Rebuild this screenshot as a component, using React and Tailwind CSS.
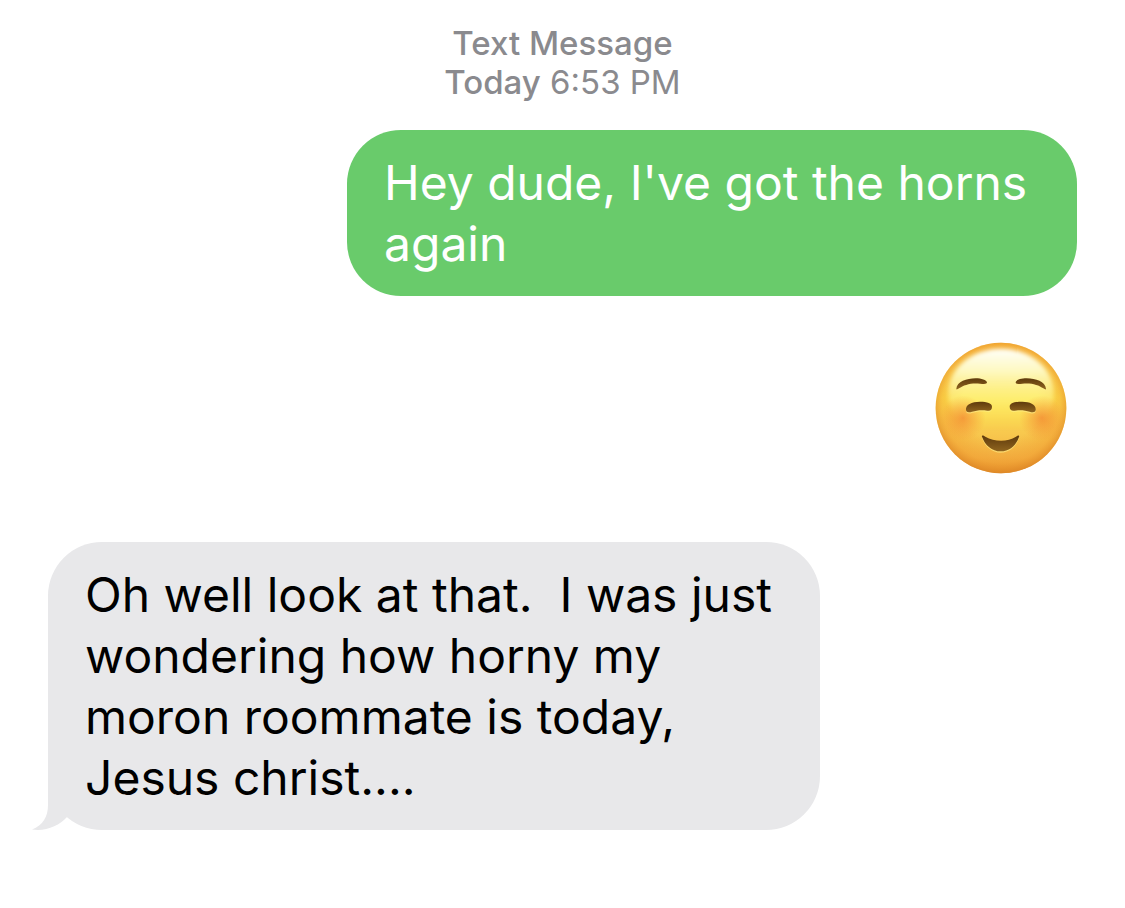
const messages = [
  { id: 1, from: 'me', text: "Hey dude, I've got the horns again" },
  { id: 2, from: 'me', sticker: true },
  {
    id: 3,
    from: 'them',
    text: 'Oh well look at that.\u00a0 I was just wondering how horny my moron roommate is today, Jesus christ....',
  },
]

function SmilingFace() {
  return (
    <svg viewBox="0 0 396 396" className="size-33" role="img" aria-label="Smiling face">
      <defs>
        <linearGradient id="face" x1="0" y1="0" x2="0" y2="1">
          <stop offset="0" stopColor="#f5b63a" />
          <stop offset="0.2" stopColor="#fad452" />
          <stop offset="0.42" stopColor="#fde650" />
          <stop offset="0.65" stopColor="#f9cd50" />
          <stop offset="0.88" stopColor="#f3b344" />
          <stop offset="1" stopColor="#e6962f" />
        </linearGradient>
        <radialGradient id="edge" cx="0.5" cy="0.47" r="0.53">
          <stop offset="0.55" stopColor="#f0982c" stopOpacity="0" />
          <stop offset="0.85" stopColor="#f0982c" stopOpacity="0.4" />
          <stop offset="1" stopColor="#dc8424" stopOpacity="0.8" />
        </radialGradient>
        <linearGradient id="shine" x1="0" y1="0" x2="0" y2="1">
          <stop offset="0" stopColor="#fffffa" />
          <stop offset="0.25" stopColor="#fefbc8" stopOpacity="0.95" />
          <stop offset="0.55" stopColor="#fef48c" stopOpacity="0.6" />
          <stop offset="0.9" stopColor="#feee58" stopOpacity="0" />
        </linearGradient>
        <radialGradient id="blush">
          <stop offset="0" stopColor="#f27a2c" stopOpacity="0.65" />
          <stop offset="0.5" stopColor="#f3842f" stopOpacity="0.35" />
          <stop offset="1" stopColor="#f58f34" stopOpacity="0" />
        </radialGradient>
        <linearGradient id="feature" x1="0" y1="0" x2="0" y2="1">
          <stop offset="0" stopColor="#5e3a0c" />
          <stop offset="1" stopColor="#8f641f" />
        </linearGradient>
        <filter id="soften" x="-10%" y="-10%" width="120%" height="120%">
          <feGaussianBlur stdDeviation="6" />
        </filter>
      </defs>
      <circle cx="198" cy="198" r="196" fill="url(#face)" />
      <circle cx="198" cy="198" r="196" fill="url(#edge)" />
      <ellipse cx="198" cy="152" rx="158" ry="132" fill="url(#shine)" filter="url(#soften)" />
      <circle cx="84" cy="228" r="68" fill="url(#blush)" />
      <circle cx="320" cy="228" r="68" fill="url(#blush)" />
      {/* light rim under every feature */}
      <g fill="#fff08a" opacity="0.6" transform="translate(0 4)">
        <path d="M64 140C66 119 95 109 122 109C139 109 155 114 156 121C156 127 147 126 135 125C108 122 86 129 72 139C66 143 64 143 64 140Z" />
        <path d="M333 140C331 119 302 109 275 109C258 109 243 114 242 121C242 127 250 126 262 125C289 122 311 129 325 139C331 143 333 143 333 140Z" />
        <path d="M93 204C91 188 110 179 135 179C157 179 171 184 171 194C171 203 166 208 157 206C140 203 124 205 111 209C101 212 94 211 93 204Z" />
        <path d="M302 204C304 188 285 179 262 179C239 179 224 184 224 194C224 203 230 208 239 206C255 203 272 205 284 209C294 212 301 211 302 204Z" />
        <path d="M141 284C139 279 145 280 151 284C178 300 217 301 243 284C250 279 254 279 252 285C243 311 223 328 197 328C171 328 150 310 141 284Z" />
      </g>
      <g fill="url(#feature)">
        <path d="M64 140C66 119 95 109 122 109C139 109 155 114 156 121C156 127 147 126 135 125C108 122 86 129 72 139C66 143 64 143 64 140Z" />
        <path d="M333 140C331 119 302 109 275 109C258 109 243 114 242 121C242 127 250 126 262 125C289 122 311 129 325 139C331 143 333 143 333 140Z" />
        <path d="M93 204C91 188 110 179 135 179C157 179 171 184 171 194C171 203 166 208 157 206C140 203 124 205 111 209C101 212 94 211 93 204Z" />
        <path d="M302 204C304 188 285 179 262 179C239 179 224 184 224 194C224 203 230 208 239 206C255 203 272 205 284 209C294 212 301 211 302 204Z" />
        <path d="M141 284C139 279 145 280 151 284C178 300 217 301 243 284C250 279 254 279 252 285C243 311 223 328 197 328C171 328 150 310 141 284Z" />
      </g>
    </svg>
  )
}

function Tail() {
  return (
    <svg viewBox="0 0 36 56" className="absolute -left-4 bottom-0 h-14 w-9 text-[#e8e8ea]" aria-hidden="true">
      <path fill="currentColor" d="M16 0V31C16 43 11 51 0 55.5C14 57.5 27 52 35 43V0Z" />
    </svg>
  )
}

function Message({ from, text, sticker }) {
  if (sticker) {
    return (
      <div className="self-end pt-[46px] pr-2.5 pb-[68px]">
        <SmilingFace />
      </div>
    )
  }
  if (from === 'me') {
    return (
      <div className="max-w-[730px] self-end rounded-[54px] bg-[#69cb6b] px-[37px] py-[22px] text-white">
        <p>{text}</p>
      </div>
    )
  }
  return (
    <div className="relative max-w-[772px] self-start rounded-[54px] bg-[#e8e8ea] px-[37px] pt-[22px] pb-[22px] text-black">
      <Tail />
      <p>{text}</p>
    </div>
  )
}

export default function App() {
  return (
    <main className="min-h-screen bg-white px-12 pt-6 font-['Inter','Liberation_Sans',sans-serif]">
      <header className="pb-7 text-center text-[33px] leading-[39px] text-[#8a8a8e]">
        <p className="font-medium">Text Message</p>
        <p>
          <span className="font-medium">Today</span> <time dateTime="18:53">6:53 PM</time>
        </p>
      </header>
      <section className="flex flex-col text-[48px] leading-[61px]">
        {messages.map((message) => (
          <Message key={message.id} {...message} />
        ))}
      </section>
    </main>
  )
}
